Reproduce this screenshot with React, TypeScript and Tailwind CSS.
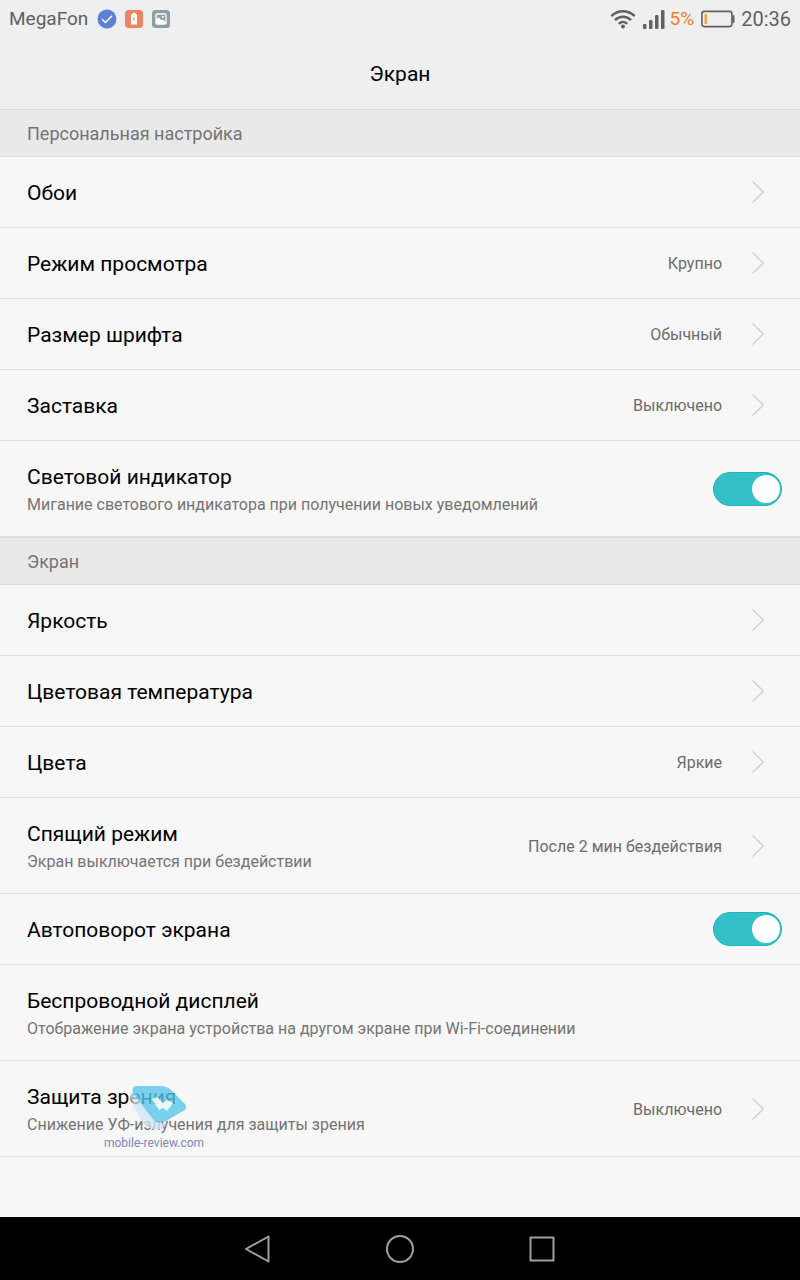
import type { ReactNode } from "react";

interface SettingItem {
  title: string;
  description?: string;
  value?: string;
  kind: "link" | "toggle" | "plain";
  watermark?: boolean;
}

interface SettingGroup {
  heading: string;
  items: SettingItem[];
}

const groups: SettingGroup[] = [
  {
    heading: "Персональная настройка",
    items: [
      { title: "Обои", kind: "link" },
      { title: "Режим просмотра", value: "Крупно", kind: "link" },
      { title: "Размер шрифта", value: "Обычный", kind: "link" },
      { title: "Заставка", value: "Выключено", kind: "link" },
      {
        title: "Световой индикатор",
        description: "Мигание светового индикатора при получении новых уведомлений",
        kind: "toggle",
      },
    ],
  },
  {
    heading: "Экран",
    items: [
      { title: "Яркость", kind: "link" },
      { title: "Цветовая температура", kind: "link" },
      { title: "Цвета", value: "Яркие", kind: "link" },
      {
        title: "Спящий режим",
        description: "Экран выключается при бездействии",
        value: "После 2 мин бездействия",
        kind: "link",
      },
      { title: "Автоповорот экрана", kind: "toggle" },
      {
        title: "Беспроводной дисплей",
        description: "Отображение экрана устройства на другом экране при Wi-Fi-соединении",
        kind: "plain",
      },
      {
        title: "Защита зрения",
        description: "Снижение УФ-излучения для защиты зрения",
        value: "Выключено",
        kind: "link",
        watermark: true,
      },
    ],
  },
];

function StatusBar() {
  return (
    <div className="flex h-[38px] items-center justify-between px-[9px] text-[#616161]">
      <div className="flex items-center">
        <span className="text-[19px] leading-6">MegaFon</span>
        <svg className="ml-[9px] h-5 w-5" viewBox="0 0 20 20" fill="none">
          <circle cx="10" cy="10" r="9.5" fill="#5b82d4" />
          <path d="M5 10.2l3.5 3.300 6.500-6.700" stroke="#fff" strokeWidth="1.5" />
        </svg>
        <svg className="ml-2 h-[18px] w-[18px]" viewBox="0 0 18 18">
          <rect width="18" height="18" rx="3.5" fill="#ed8462" />
          <path d="M7.3 3h3.4v1.5H12V14.5H6V4.5h1.3z" fill="#fff" />
          <path d="M9.6 6L7.9 9.6h1L8.5 12l1.8-3.5H9.2z" fill="#ed8462" />
        </svg>
        <svg className="ml-[9px] h-[18px] w-[18px]" viewBox="0 0 18 18">
          <rect width="18" height="18" rx="3.5" fill="#8f9da6" />
          <rect x="4" y="4" width="10" height="10" rx="1" fill="none" stroke="#fff" strokeWidth="1.3" />
          <path d="M4 9l2.400-1.800 3.400 3 1.600-.8L14 13v1H4z" fill="#fff" />
          <circle cx="10.8" cy="6.8" r="1.1" fill="#fff" />
        </svg>
      </div>
      <div className="flex items-center">
        <svg className="h-5 w-[26px]" viewBox="0 0 26 20" fill="none" stroke="#616161" strokeWidth="2.5">
          <path d="M1.3 7.2C8 .6 18 .6 24.7 7.2" />
          <path d="M5 11.2c4.600-4.500 11.400-4.500 16 0" />
          <path d="M8.800 14.800c2.500-2.400 5.900-2.400 8.400 0" />
          <circle cx="13" cy="17.400" r="2" fill="#616161" stroke="none" />
        </svg>
        <svg className="ml-[7px] h-[19px] w-[22px]" viewBox="0 0 22 19" fill="#616161">
          <rect x="0" y="14" width="3.500" height="5" rx="1" />
          <rect x="6" y="10" width="3.500" height="9" rx="1" />
          <rect x="12" y="5" width="3.500" height="14" rx="1" />
          <rect x="18" y="0" width="3.500" height="19" rx="1" />
        </svg>
        <span className="ml-[5px] text-[19px] leading-6 text-[#f97b24]">5%</span>
        <svg className="ml-[7px] h-[18px] w-[34px]" viewBox="0 0 34 18">
          <rect x="0.900" y="1.400" width="30" height="15.200" rx="2.500" fill="none" stroke="#616161" strokeWidth="1.600" />
          <rect x="3.500" y="4" width="2.500" height="10" fill="#f9a04a" />
          <rect x="31.500" y="5" width="2" height="8" rx="1" fill="#616161" />
        </svg>
        <span className="ml-[6px] text-[20px] leading-6">20:36</span>
      </div>
    </div>
  );
}

function Chevron() {
  return (
    <svg className="ml-[30px] mr-[18px] h-[22px] w-3 shrink-0" viewBox="0 0 12 22" fill="none" stroke="#cfcfcf" strokeWidth="1.3">
      <path d="M.5.5L11.300 11 .5 21.500" />
    </svg>
  );
}

function Watermark() {
  return (
    <span className="pointer-events-none absolute left-[104px] top-6 flex w-[101px] flex-col">
      <svg className="ml-[25px] h-[50px] w-[60px]" viewBox="0 0 60 50">
        <path d="M5 5C1 7 0 12 3 18l9 17c5 8 14 12 22 8l3-4C30 38 22 35 18 27z" fill="#cfe6f6" opacity="0.75" />
        <path d="M8 1h22c5 0 9 1 12 4l13 13c3 3 3 6-1 8L37 36c-6 3-12 1-15-4L7 12C4 8 3 6 4 3 5 1 6 1 8 1z" fill="#58c5ea" opacity="0.8" />
        <path d="M23 14l5-2 6 6 4-3 6 3-6 8-4-3-4 2z" fill="#fff" opacity="0.85" />
      </svg>
      <span className="whitespace-nowrap text-[12px] leading-4 text-[#8088b8]">mobile-review.com</span>
    </span>
  );
}

function RowText({ item }: { item: SettingItem }) {
  return (
    <span className={item.description ? "flex flex-1 flex-col pt-1" : "flex flex-1 flex-col pt-0.5"}>
      <span className="text-[21px] leading-7 text-black">{item.title}</span>
      {item.description && <span className="text-[16px] leading-7 text-[#747474]">{item.description}</span>}
    </span>
  );
}

function SettingRow({ item }: { item: SettingItem }) {
  const height = item.description ? "h-24" : "h-[71px]";
  const row = `relative flex w-full items-center border-b border-[#e0e0e0] pl-[27px] pr-[18px] text-left ${height}`;

  if (item.kind === "toggle") {
    return (
      <label className={row}>
        <RowText item={item} />
        <input
          type="checkbox"
          role="switch"
          defaultChecked
          className="relative h-[34px] w-[69px] shrink-0 appearance-none rounded-full border border-[#c4c4c4] bg-[#d0d0d0] before:absolute before:left-[2px] before:top-[2px] before:h-7 before:w-7 before:rounded-full before:bg-white checked:border-[#1fb5ba] checked:bg-[#34c0c6] checked:before:left-[38px]"
        />
      </label>
    );
  }

  return (
    <button type="button" className={row}>
      <RowText item={item} />
      {item.value && <span className="pt-0.5 text-[16px] leading-6 text-[#6c6c6c]">{item.value}</span>}
      {item.kind === "link" && <Chevron />}
      {item.watermark && <Watermark />}
    </button>
  );
}

function NavButton({ label, children }: { label: string; children: ReactNode }) {
  return (
    <button type="button" aria-label={label} className="flex h-[63px] w-[142px] items-center justify-center">
      <svg className="h-8 w-8" viewBox="0 0 32 32" fill="none" stroke="#a0a0a0" strokeWidth="2" strokeLinejoin="round">
        {children}
      </svg>
    </button>
  );
}

export default function App() {
  return (
    <div className="flex min-h-screen flex-col bg-[#f7f7f7] font-[Roboto,sans-serif]">
      <header className="bg-[#efefef]">
        <StatusBar />
        <h1 className="flex h-[71px] items-center justify-center text-[21px] leading-7 text-black">Экран</h1>
      </header>

      <main className="flex-1">
        {groups.map((group) => (
          <section key={group.heading}>
            <h2 className="flex h-12 items-center border-y border-t-[#d9d9d9] border-b-[#dedede] bg-[#e9e9e9] pl-[27px] pt-0.5 text-[18px] leading-6 text-[#747474]">
              {group.heading}
            </h2>
            {group.items.map((item) => (
              <SettingRow key={item.title} item={item} />
            ))}
          </section>
        ))}
      </main>

      <nav className="flex justify-center bg-black">
        <NavButton label="Назад">
          <path d="M26.500 3.500v25L4 16z" />
        </NavButton>
        <NavButton label="Домой">
          <circle cx="16" cy="16" r="13" />
        </NavButton>
        <NavButton label="Недавние">
          <rect x="4.500" y="4.500" width="23" height="23" />
        </NavButton>
      </nav>
    </div>
  );
}
